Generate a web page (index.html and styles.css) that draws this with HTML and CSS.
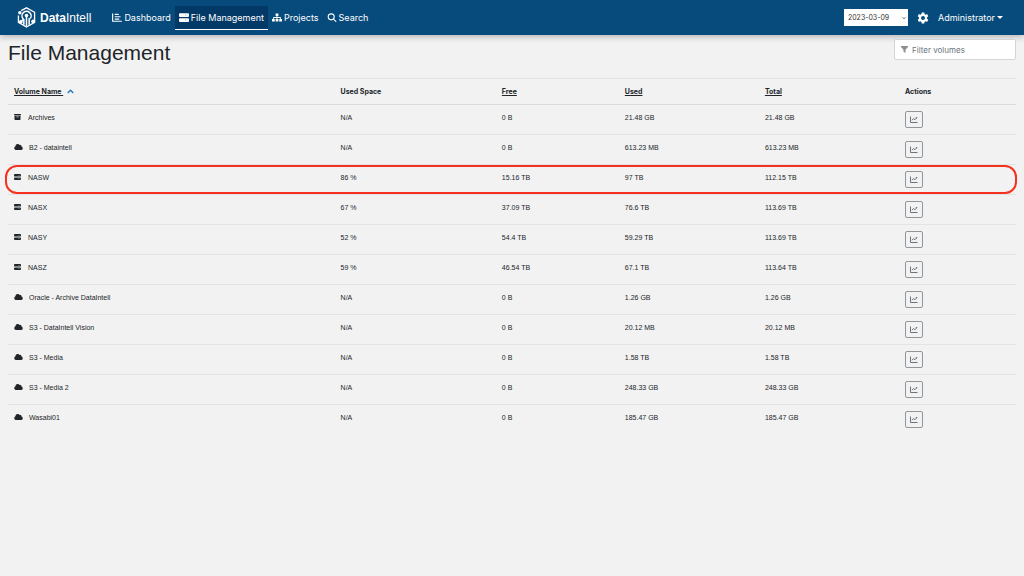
FILE: index.html
```html
<!DOCTYPE html>
<html lang="en">

<head>
    <meta charset="UTF-8">
    <meta name="viewport" content="width=device-width, initial-scale=1.0">
    <title>DataIntell - File Management</title>
    <link rel="stylesheet" href="styles.css">
</head>

<body>
    <!-- icons used more than once -->
    <svg class="sprite" aria-hidden="true">
        <symbol id="server" viewBox="0 0 16 14">
            <path fill-rule="evenodd" d="M1.500 0h13A1.500 1.500 0 0 1 16 1.500v3A1.500 1.500 0 0 1 14.500 6h-13A1.500 1.500 0 0 1 0 4.500v-3A1.500 1.500 0 0 1 1.500 0zM10 2.500v1h1v-1zM12.500 2.500v1h1v-1z" />
            <path fill-rule="evenodd" d="M1.500 8h13A1.500 1.500 0 0 1 16 9.500v3a1.500 1.500 0 0 1-1.500 1.500h-13A1.500 1.500 0 0 1 0 12.500v-3A1.500 1.500 0 0 1 1.500 8zM10 10.500v1h1v-1zM12.500 10.500v1h1v-1z" />
        </symbol>
        <symbol id="cloud" viewBox="0 0 20 14">
            <path d="M16.800 6.100A3 3 0 0 0 12.400 2.500 5 5 0 0 0 3 5v.3A4.500 4.500 0 0 0 4.500 14H16a4 4 0 0 0 .8-7.900z" />
        </symbol>
        <symbol id="archive" viewBox="0 0 16 14">
            <path fill-rule="evenodd" d="M.8 0h14.400a.8.8 0 0 1 .8.8V3H0V.8A.8.8 0 0 1 .8 0zM1 4h14v9a1 1 0 0 1-1 1H2a1 1 0 0 1-1-1zM5.500 6v1.500h5V6z" />
        </symbol>
        <symbol id="chart" viewBox="0 0 16 14">
            <path fill="none" stroke="currentColor" stroke-width="2" d="M1 1v12h14M4 8.500l3-3.500 3 2.500 4-4.500M11.500 3H14" />
        </symbol>
    </svg>

    <nav class="navbar">
        <a class="brand" href="#">
            <svg class="brand-logo" viewBox="0 0 20 22" aria-hidden="true">
                <path fill="none" stroke="#fff" stroke-width="1.400" d="M4.500 3.800L10 .8l8.500 4.700v10.500L10 21l-8.500-5V9" />
                <path fill="none" stroke="#fff" stroke-width="1.600" d="M6.500 12.500A4.800 4.800 0 1 1 14 12" />
                <circle cx="3" cy="6" r="1.800" fill="#fff" />
                <circle cx="17" cy="15" r="2" fill="#fff" />
                <circle cx="4" cy="15.500" r="2" fill="#fff" />
                <circle cx="10" cy="9" r="1.900" fill="#fff" />
                <path stroke="#fff" stroke-width="1.600" d="M10 9v11M7.200 12.500v6M12.800 11.500v7M4 15.500l3.500-3" />
            </svg>
            <span class="brand-name"><b>Data</b>Intell</span>
        </a>
        <ul class="nav-links">
            <li><a class="nav-link" href="#">
                <svg class="nav-icon" viewBox="0 0 16 14" aria-hidden="true"><path fill="none" stroke="currentColor" stroke-width="1.800" stroke-linecap="round" d="M1 1v12h14M5 2h5M5 5.800h8M5 9.500h6" /></svg>
                Dashboard</a></li>
            <li><a class="nav-link active" href="#">
                <svg class="nav-icon" aria-hidden="true"><use href="#server" /></svg>
                File Management</a></li>
            <li><a class="nav-link" href="#">
                <svg class="nav-icon" viewBox="0 0 18 14" aria-hidden="true"><path d="M6.500 0h5v4.500h-1.700v1.700h6v3.300H18V14h-5V9.500h1.300V7.700H9.800v1.800h1.700V14h-5V9.500h1.700V7.700H3.700v1.800H5V14H0V9.500h2.200V6.200h6V4.500H6.500z" /></svg>
                Projects</a></li>
            <li><a class="nav-link" href="#">
                <svg class="nav-icon" viewBox="0 0 14 14" aria-hidden="true"><path fill="none" stroke="currentColor" stroke-width="1.700" stroke-linecap="round" d="M10.500 6a4.700 4.700 0 1 1-9.400 0 4.700 4.700 0 0 1 9.400 0zM9.300 9.500L13 13.200" /></svg>
                Search</a></li>
        </ul>
        <div class="nav-right">
            <div class="date-picker">
                <select class="date-select" aria-label="Report date">
                    <option>2023-03-09</option>
                </select>
                <svg class="date-arrow" viewBox="0 0 8 5" aria-hidden="true"><path fill="none" stroke="#333" stroke-width="1.500" d="M1 1l3 3 3-3" /></svg>
            </div>
            <button class="nav-button" aria-label="Settings">
                <svg class="gear" viewBox="0 0 24 24" aria-hidden="true"><path fill-rule="evenodd" d="M9.500 1h5l.6 3.200 2 1.100 3-1.100 2.500 4.300-2.500 2.100v2.800l2.500 2.100-2.500 4.300-3-1.100-2 1.100-.6 3.200h-5l-.6-3.200-2-1.100-3 1.100-2.500-4.300 2.500-2.100v-2.800L1.400 8.500l2.500-4.300 3 1.100 2-1.100zM12 8a4 4 0 1 0 0 8 4 4 0 0 0 0-8z" /></svg>
            </button>
            <button class="nav-button user-menu">Administrator<span class="caret"></span></button>
        </div>
    </nav>

    <main>
        <header class="page-header">
            <h1>File Management</h1>
            <label class="filter">
                <svg class="filter-icon" viewBox="0 0 14 14" aria-hidden="true"><path d="M0 0h14v2L9 7.500V14l-4-2.500v-4L0 2z" /></svg>
                <input class="filter-input" type="text" placeholder="Filter volumes" aria-label="Filter volumes">
            </label>
        </header>

        <table class="volumes">
            <thead>
                <tr>
                    <th class="col-name"><a href="#">Volume Name </a><svg class="sort" viewBox="0 0 10 6" aria-hidden="true"><path fill="none" stroke="#1b75bb" stroke-width="1.800" d="M1 5.200L5 1.200l4 4" /></svg></th>
                    <th class="col-space">Used Space</th>
                    <th class="col-free"><a href="#">Free</a></th>
                    <th class="col-used"><a href="#">Used</a></th>
                    <th class="col-total"><a href="#">Total</a></th>
                    <th>Actions</th>
                </tr>
            </thead>
            <tbody>
                <tr>
                    <td><svg class="icon"><use href="#archive" /></svg>Archives</td>
                    <td>N/A</td><td>0 B</td><td>21.48 GB</td><td>21.48 GB</td>
                    <td><button class="action" aria-label="Chart"><svg><use href="#chart" /></svg></button></td>
                </tr>
                <tr>
                    <td><svg class="icon cloud"><use href="#cloud" /></svg>B2 - dataintell</td>
                    <td>N/A</td><td>0 B</td><td>613.23 MB</td><td>613.23 MB</td>
                    <td><button class="action" aria-label="Chart"><svg><use href="#chart" /></svg></button></td>
                </tr>
                <tr class="highlight">
                    <td><svg class="icon"><use href="#server" /></svg>NASW</td>
                    <td>86 %</td><td>15.16 TB</td><td>97 TB</td><td>112.15 TB</td>
                    <td><button class="action" aria-label="Chart"><svg><use href="#chart" /></svg></button></td>
                </tr>
                <tr>
                    <td><svg class="icon"><use href="#server" /></svg>NASX</td>
                    <td>67 %</td><td>37.09 TB</td><td>76.6 TB</td><td>113.69 TB</td>
                    <td><button class="action" aria-label="Chart"><svg><use href="#chart" /></svg></button></td>
                </tr>
                <tr>
                    <td><svg class="icon"><use href="#server" /></svg>NASY</td>
                    <td>52 %</td><td>54.4 TB</td><td>59.29 TB</td><td>113.69 TB</td>
                    <td><button class="action" aria-label="Chart"><svg><use href="#chart" /></svg></button></td>
                </tr>
                <tr>
                    <td><svg class="icon"><use href="#server" /></svg>NASZ</td>
                    <td>59 %</td><td>46.54 TB</td><td>67.1 TB</td><td>113.64 TB</td>
                    <td><button class="action" aria-label="Chart"><svg><use href="#chart" /></svg></button></td>
                </tr>
                <tr>
                    <td><svg class="icon cloud"><use href="#cloud" /></svg>Oracle - Archive DataIntell</td>
                    <td>N/A</td><td>0 B</td><td>1.26 GB</td><td>1.26 GB</td>
                    <td><button class="action" aria-label="Chart"><svg><use href="#chart" /></svg></button></td>
                </tr>
                <tr>
                    <td><svg class="icon cloud"><use href="#cloud" /></svg>S3 - DataIntell Vision</td>
                    <td>N/A</td><td>0 B</td><td>20.12 MB</td><td>20.12 MB</td>
                    <td><button class="action" aria-label="Chart"><svg><use href="#chart" /></svg></button></td>
                </tr>
                <tr>
                    <td><svg class="icon cloud"><use href="#cloud" /></svg>S3 - Media</td>
                    <td>N/A</td><td>0 B</td><td>1.58 TB</td><td>1.58 TB</td>
                    <td><button class="action" aria-label="Chart"><svg><use href="#chart" /></svg></button></td>
                </tr>
                <tr>
                    <td><svg class="icon cloud"><use href="#cloud" /></svg>S3 - Media 2</td>
                    <td>N/A</td><td>0 B</td><td>248.33 GB</td><td>248.33 GB</td>
                    <td><button class="action" aria-label="Chart"><svg><use href="#chart" /></svg></button></td>
                </tr>
                <tr>
                    <td><svg class="icon cloud"><use href="#cloud" /></svg>Wasabi01</td>
                    <td>N/A</td><td>0 B</td><td>185.47 GB</td><td>185.47 GB</td>
                    <td><button class="action" aria-label="Chart"><svg><use href="#chart" /></svg></button></td>
                </tr>
            </tbody>
        </table>
    </main>
</body>

</html>
```
FILE: styles.css
```css
* {
    box-sizing: border-box;
    margin: 0px;
    padding: 0px;
}

body {
    background-color: #f2f2f2;
    color: #212529;
    font-family: "Liberation Sans", Arial, sans-serif;
    font-size: 7px;
}

button,
input,
select {
    font-family: inherit;
}

.sprite {
    display: none;
}

svg {
    fill: currentColor;
}

/* top bar */
.navbar {
    display: flex;
    align-items: center;
    height: 35px;
    padding: 0px 21px 0px 17px;
    background-color: #074b7c;
    color: #fff;
    box-shadow: 0px 2px 6px rgba(0, 0, 0, 0.25);
}

.brand {
    display: flex;
    align-items: center;
    gap: 4px;
    color: #fff;
    text-decoration: none;
}

.brand-logo {
    width: 19px;
    height: 21px;
}

.brand-name {
    font-size: 12px;
}

.nav-links {
    display: flex;
    list-style: none;
    margin-left: 17px;
}

.nav-link {
    display: flex;
    align-items: center;
    gap: 2px;
    height: 24px;
    padding: 0px 4px;
    border-bottom: 1px solid transparent;
    color: #fff;
    font-family: Inter, sans-serif;
    font-size: 9px;
    text-decoration: none;
}

.nav-link.active {
    background-color: #033966;
    border-bottom-color: #fff;
}

.nav-icon {
    width: 10px;
    height: 9px;
}

.nav-right {
    display: flex;
    align-items: center;
    gap: 9px;
    margin-left: auto;
}

.date-picker {
    position: relative;
}

.date-select {
    display: block;
    appearance: none;
    width: 64px;
    height: 17px;
    padding: 0px 4px;
    border: none;
    background-color: #fff;
    color: #333;
    font-family: Inter, sans-serif;
    font-size: 7px;
}

.date-arrow {
    position: absolute;
    right: 2px;
    top: 7px;
    width: 4px;
    height: 4px;
    pointer-events: none;
}

.nav-button {
    display: flex;
    align-items: center;
    border: none;
    background: none;
    color: #fff;
    font-family: Inter, sans-serif;
    font-size: 9px;
}

.gear {
    width: 12px;
    height: 12px;
}

.caret {
    margin-left: 2px;
    border: 3px solid transparent;
    border-top-color: #fff;
    border-bottom: none;
}

/* title and filter */
.page-header {
    display: flex;
    justify-content: space-between;
    align-items: flex-start;
    height: 43px;
    padding: 4px 8px 0px;
}

h1 {
    font-size: 21px;
    font-weight: normal;
    line-height: 28px;
}

.filter {
    display: flex;
    align-items: center;
    gap: 4px;
    width: 122px;
    height: 21px;
    padding: 0px 6px;
    border: 1px solid #d3d6d9;
    border-radius: 2px;
    background-color: #fff;
}

.filter-icon {
    flex: none;
    width: 7px;
    height: 7px;
    color: #8b8f94;
}

.filter-input {
    width: 100%;
    border: none;
    outline: none;
    background: none;
    font-family: Inter, sans-serif;
    font-size: 8px;
}

.filter-input::placeholder {
    color: #6c757d;
}

main {
    padding-bottom: 16px;
}

/* volume list */
.volumes {
    width: calc(100% - 16px);
    margin: 0px 8px;
    border-top: 1px solid #e2e3e4;
    border-spacing: 0px;
    table-layout: fixed;
}

.col-name {
    width: 32.4%;
}

.col-space {
    width: 16%;
}

.col-free {
    width: 12.2%;
}

.col-used {
    width: 13.9%;
}

.col-total {
    width: 13.9%;
}

th {
    padding: 6px 6px 5px;
    border-bottom: 1px solid #d9dbdc;
    font-family: Inter, sans-serif;
    line-height: 14px;
    text-align: left;
}

th a {
    color: inherit;
}

.sort {
    width: 7px;
    height: 5px;
    margin-left: 4px;
}

td {
    padding: 6px;
    border-bottom: 1px solid #e2e3e4;
    line-height: 14px;
    vertical-align: top;
}

tbody tr:last-child td {
    border-bottom: none;
}

.icon {
    width: 7px;
    height: 6px;
    margin-right: 7px;
}

.icon.cloud {
    width: 9px;
    margin-right: 6px;
}

.action {
    display: flex;
    align-items: center;
    justify-content: center;
    width: 18px;
    height: 17px;
    border: 1px solid #8f969c;
    border-radius: 2px;
    background: none;
    color: #6c757d;
}

.action svg {
    width: 8px;
    height: 7px;
}

.highlight {
    position: relative;
}

/* ring round the whole row */
.highlight td:first-child::after {
    content: "";
    position: absolute;
    inset: 0px -1px 1px -3px;
    border: 2px solid #f5321f;
    border-radius: 12px;
    pointer-events: none;
}
```
